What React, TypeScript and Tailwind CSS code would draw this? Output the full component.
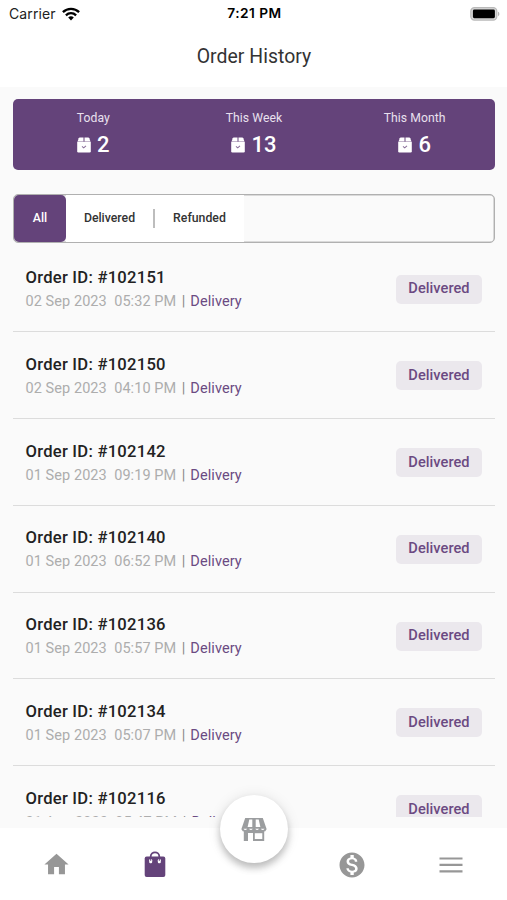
import { MdHome, MdMonetizationOn } from "react-icons/md";

const STATS = [
  { label: "Today", value: 2 },
  { label: "This Week", value: 13 },
  { label: "This Month", value: 6 },
];

const ORDERS = [
  { id: 102151, date: "02 Sep 2023", time: "05:32 PM" },
  { id: 102150, date: "02 Sep 2023", time: "04:10 PM" },
  { id: 102142, date: "01 Sep 2023", time: "09:19 PM" },
  { id: 102140, date: "01 Sep 2023", time: "06:52 PM" },
  { id: 102136, date: "01 Sep 2023", time: "05:57 PM" },
  { id: 102134, date: "01 Sep 2023", time: "05:07 PM" },
  { id: 102116, date: "31 Aug 2023", time: "05:47 PM" },
];

function WifiIcon() {
  return (
    <svg viewBox="0 0 18 14" className="h-[14px] w-[18px]" fill="none" stroke="#000" strokeWidth="2.3">
      <path d="M0.9 5.1C5.4 0.7 12.6 0.7 17.1 5.1" />
      <path d="M3.9 8.3C6.8 5.5 11.2 5.5 14.1 8.3" />
      <path d="M6.2 10.5C7.9 8.9 10.1 8.9 11.8 10.5L9 13.4Z" fill="#000" stroke="none" />
    </svg>
  );
}

function BatteryIcon() {
  return (
    <svg viewBox="0 0 30 14" className="h-[14px] w-[30px]">
      <rect x="0.8" y="0.7" width="26" height="12.4" rx="3.6" fill="#d8d8d8" stroke="#b9b9b9" strokeWidth="1.2" />
      <rect x="2.9" y="2.6" width="22" height="8.6" rx="1.4" fill="#000" />
      <path d="M28 4.8C29.8 5.4 29.8 8.6 28 9.2Z" fill="#b5b5b5" />
    </svg>
  );
}

function PackageIcon() {
  return (
    <svg viewBox="0 0 14 16" className="h-4 w-[14px]" fill="#fff">
      <path d="M2.8 0.5H6.5V4.4H0.6L1.7 1.3Q2 0.5 2.8 0.5Z" />
      <path d="M7.5 0.5H11.2Q12 0.5 12.3 1.3L13.4 4.4H7.5Z" />
      <path d="M0.2 4.7H13.8V14.2Q13.8 15.4 12.6 15.4H1.4Q0.2 15.4 0.2 14.2Z" />
      <path d="M5 9.4L6.7 10.8L9 8.8" fill="none" stroke="#8b719b" strokeWidth="1.1" />
    </svg>
  );
}

function BagIcon() {
  return (
    <svg viewBox="0 0 22 27" className="h-[27px] w-[22px]">
      <path d="M6.7 7V5.5C6.7 0 15.3 0 15.3 5.5V7" fill="none" stroke="#64437a" strokeWidth="1.8" />
      <path d="M2.6 5.5H19.4Q21.3 5.5 21.3 7.4V24Q21.3 26 19.4 26H2.6Q0.7 26 0.7 24V7.4Q0.7 5.5 2.6 5.5Z" fill="#64437a" />
      <rect x="5.2" y="8" width="3" height="4.2" rx="1.2" fill="#fff" />
      <rect x="13.8" y="8" width="3" height="4.2" rx="1.2" fill="#fff" />
      <path d="M6.7 6V9.8M15.3 6V9.8" stroke="#64437a" strokeWidth="1.1" />
    </svg>
  );
}

function StoreIcon() {
  return (
    <svg viewBox="0 0 26 25" className="h-[25px] w-[26px]">
      <path d="M4.2 1H21.8L25.4 11.6V12.4Q24.6 14.6 22.6 14.6H3.4Q1.4 14.6 0.6 12.4V11.6Z" fill="#9b9d9f" />
      <path d="M8.3 2.6H11.3V10H6.6ZM14.7 2.6H17.7L19.4 10H14.7Z" fill="#fff" />
      <path
        d="M2.4 11.8H6.2Q4.3 14.4 2.4 11.8ZM8 11.8H11.8Q9.9 14.4 8 11.8ZM14.2 11.8H18Q16.1 14.4 14.2 11.8ZM19.8 11.8H23.6Q21.7 14.4 19.8 11.8Z"
        fill="#fff"
      />
      <path d="M2.8 14H23.2V24H12V16H7V24H2.8Z" fill="#9b9d9f" />
      <path d="M13.8 16.2H21.3V22H13.8Z" fill="#fff" />
    </svg>
  );
}

function MenuIcon() {
  return (
    <svg viewBox="0 0 24 18" className="h-[18px] w-6">
      <path d="M0.5 2.5H23.5M0.5 8.9H23.5M0.5 15.3H23.5" stroke="#979797" strokeWidth="2.2" />
    </svg>
  );
}

function OrderRow({ id, date, time }: { id: number; date: string; time: string }) {
  return (
    <div className="flex h-[86.75px] shrink-0 items-start justify-between border-b border-[#dcdcdc] pr-[13px] pl-[12.5px] pt-[20.5px]">
      <div className="pt-[2px] whitespace-pre">
        <div className="text-[16.6px] leading-[20px] font-medium tracking-[0.25px] text-[#222]">Order ID: #{id}</div>
        <div className="mt-1 text-[14.5px] leading-5 tracking-[0.07px] text-[#adadad]">
          {date}
          {"  "}
          {time}
          <span className="mr-[5px] ml-[5.5px] text-[#888]">|</span>
          <span className="text-[#6b4a82]">Delivery</span>
        </div>
      </div>
      <span className="mt-[8.5px] flex h-[29px] w-[86px] items-center justify-center rounded-[5px] bg-[#ebe8ed] text-[14.6px] font-medium tracking-[0.05px] text-[#6b4a82]">
        Delivered
      </span>
    </div>
  );
}

export default function App() {
  return (
    <div className="flex h-[900px] w-[507px] flex-col overflow-hidden bg-white font-['Roboto',sans-serif]">
      <header className="h-[87px] shrink-0">
        <div className="grid h-[27px] grid-cols-3 items-center pr-[7px] pl-[9px] font-['Inter',sans-serif] text-[14px] text-black">
          <div className="flex items-center gap-[6px]">
            <span className="tracking-[0.1px] text-[#222]">Carrier</span>
            <WifiIcon />
          </div>
          <span className="text-center text-[13.7px] font-semibold tracking-[0.5px]">7:21 PM</span>
          <div className="flex justify-end">
            <BatteryIcon />
          </div>
        </div>
        <h1 className="mt-[16px] pl-px text-center text-[19.4px] leading-7 tracking-[0.04px] text-[#333]">Order History</h1>
      </header>

      <main className="flex h-[741px] shrink-0 flex-col bg-[#fafafa] px-[13px] pt-[11.5px] pb-[11px]">
        <section className="grid h-[71px] w-[482px] shrink-0 grid-cols-3 rounded-[5px] bg-[#64437a] text-white">
          {STATS.map((s) => (
            <div key={s.label} className="flex flex-col items-center pt-[11.4px]">
              <span className="text-[12.2px] leading-4 tracking-[0.05px] text-[#e9e0ee]">{s.label}</span>
              <div className="mt-[7.6px] flex items-center gap-[6px]">
                <PackageIcon />
                <span className="text-[22px] leading-6 font-medium">{s.value}</span>
              </div>
            </div>
          ))}
        </section>

        <div className="mt-[24.5px] flex h-[49px] w-[482px] shrink-0 rounded-[5px] border border-[#b0b0b0] text-[12.3px] font-medium text-[#333] shadow-[inset_0_0_0_0.5px_#b9b9b9]">
          <button className="w-[52px] rounded-[5px] bg-[#64437a] text-white">All</button>
          <div className="flex w-[178px] items-center bg-white">
            <button className="w-[87px]">Delivered</button>
            <span className="h-[19px] w-[2px] bg-[#bdbdbd]" />
            <button className="w-[89px]">Refunded</button>
          </div>
        </div>

        <div className="mt-[2.5px] flex min-h-0 w-[482px] flex-1 flex-col overflow-hidden">
          {ORDERS.map((o) => (
            <OrderRow key={o.id} {...o} />
          ))}
        </div>
      </main>

      <nav className="relative grid h-[72px] shrink-0 grid-cols-5 items-center bg-white pt-px px-[7px] text-[#979797]">
        <div className="flex justify-center">
          <MdHome size={29} />
        </div>
        <div className="flex justify-center">
          <BagIcon />
        </div>
        {/* Raised store button over the bar */}
        <div className="absolute -top-[33px] left-[220px] flex h-[68px] w-[68px] items-center justify-center rounded-full bg-white shadow-[0_5px_7px_rgba(0,0,0,0.22),0_1px_14px_rgba(0,0,0,0.1)]">
          <StoreIcon />
        </div>
        <div className="col-start-4 flex justify-center">
          <MdMonetizationOn size={30} />
        </div>
        <div className="flex justify-center">
          <MenuIcon />
        </div>
      </nav>
    </div>
  );
}
